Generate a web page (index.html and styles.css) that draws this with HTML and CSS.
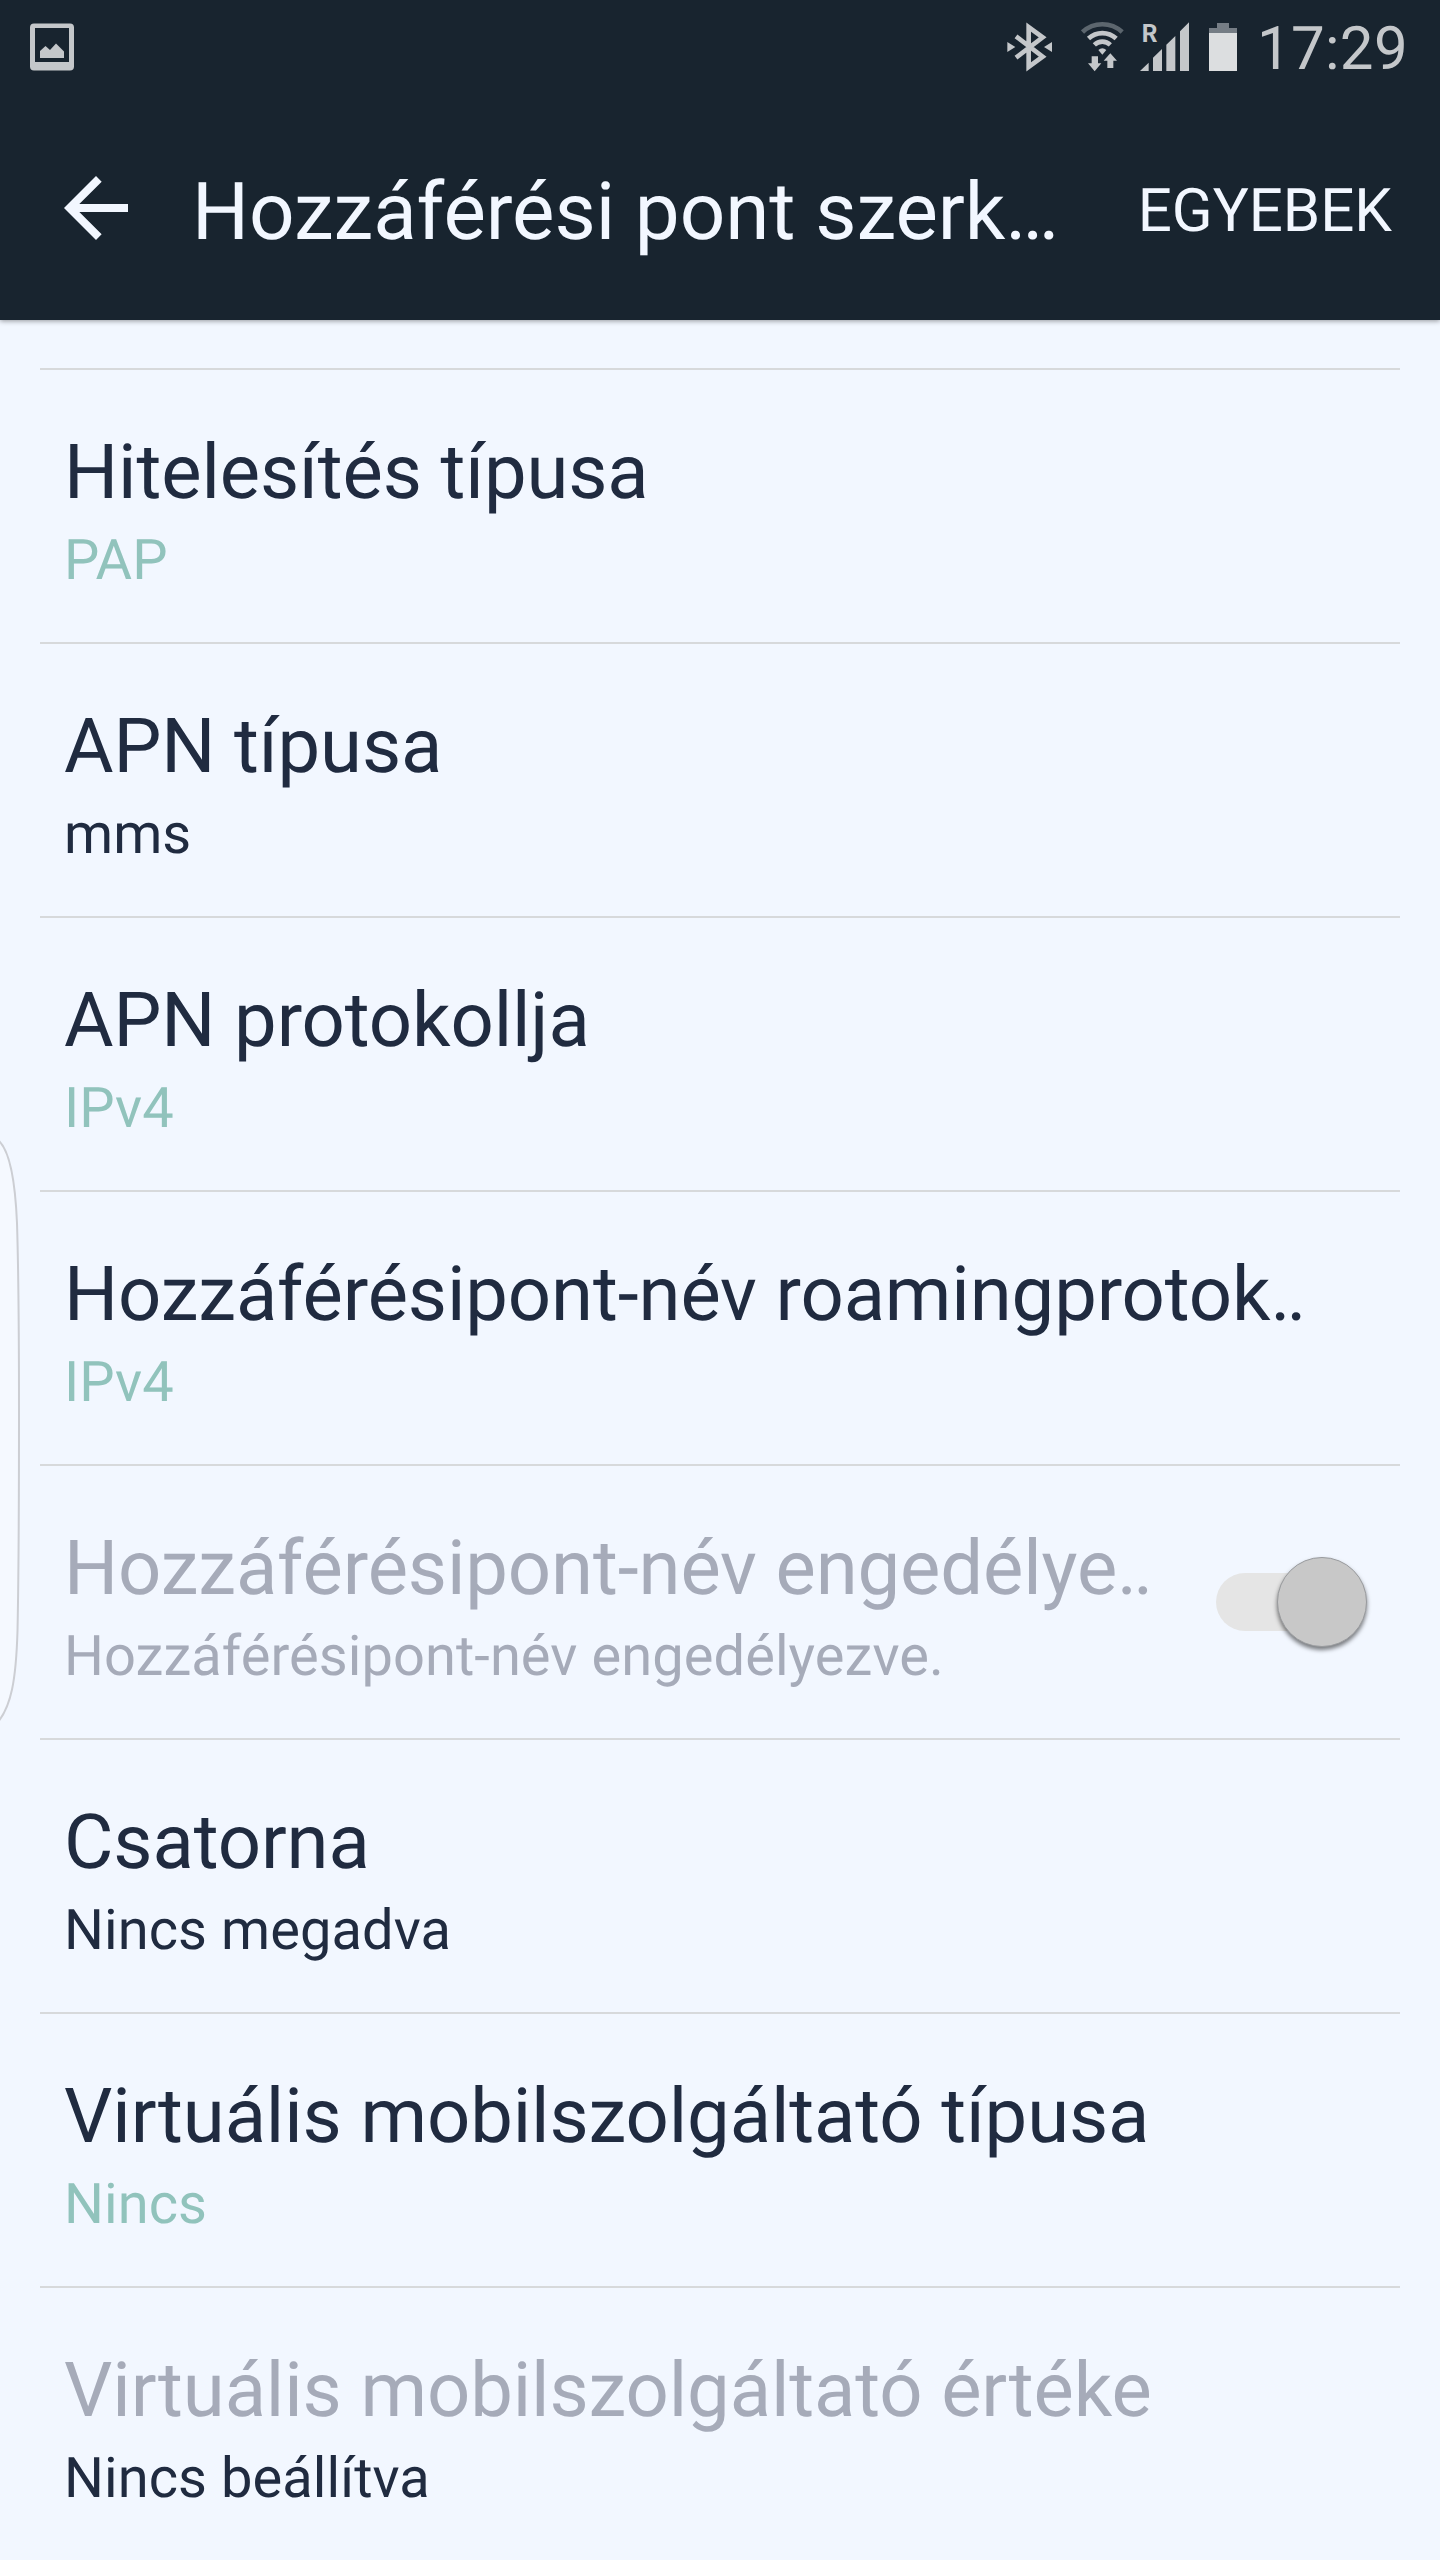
FILE: index.html
```html
<!DOCTYPE html>
<html lang="hu">
<head>
    <meta charset="UTF-8">
    <meta name="viewport" content="width=device-width, initial-scale=1.0">
    <title>Hozzáférési pont szerkesztése</title>
    <link rel="stylesheet" href="styles.css">
</head>
<body>
    <header>
        <div class="status">
            <svg class="picture" viewBox="0 0 44 48">
                <path fill-rule="evenodd" d="M4 .5H40Q44 .5 44 4.500V43.500Q44 47.500 40 47.500H4Q0 47.500 0 43.500V4.500Q0 .5 4 .5ZM5 5V39H39V5Z"/>
                <path d="M10 35V28L15.500 23L20 27L26 20.500L34 28.500V35Z"/>
            </svg>
            <svg class="bluetooth" viewBox="51 63 135 153">
                <path class="line" d="M78 109L158 170L116 201V81L158 112L78 173"/>
                <path d="M52 126L76 141L52 156ZM186 126L162 141L186 156Z"/>
            </svg>
            <svg class="wifi" viewBox="273 63 129 153">
                <path class="line dim" d="M277.500 96A87.500 87.500 0 0 1 396.500 96"/>
                <path class="line" d="M295.500 115.500A61 61 0 0 1 378.500 115.500M313 134.500A35 35 0 0 1 361 134.500"/>
                <path d="M325 150Q337 139 349 150L337 164ZM305 169H324V190H334L314 214L294 190H305ZM361 160L381 182H370V204H352V182H341Z"/>
            </svg>
            <svg class="signal" viewBox="447 33 153 183">
                <path d="M450 213L476 188V213ZM489 213V173L516 147V213ZM529 213V134L556 108V213ZM570 213V94L597 67V213Z"/>
                <text x="455" y="126" textLength="47" lengthAdjust="spacingAndGlyphs">R</text>
            </svg>
            <svg class="battery" viewBox="27 63 84 153">
                <path class="empty" d="M51 69H87V84H111V99H27V84H51Z"/>
                <path class="full" d="M27 99H111V213H27Z"/>
            </svg>
            <span class="clock">17:29</span>
        </div>
        <div class="appbar">
            <svg class="back" viewBox="0 0 24 24"><path d="M20 11H7.830l5.590-5.590L12 4l-8 8 8 8 1.410-1.410L7.830 13H20v-2z"/></svg>
            <h1>Hozzáférési pont szerk…</h1>
            <span class="more">EGYEBEK</span>
        </div>
    </header>
    <svg class="edge" viewBox="0 0 24 600"><path d="M-2 29C9 38 15 65 17 112C18.500 160 19 220 19 300C19 390 19 450 17.500 520C16 570 11 595 -2 611"/></svg>
    <ul class="list">
        <li>
            <div class="title">Hitelesítés típusa</div>
            <div class="value green">PAP</div>
        </li>
        <li>
            <div class="title">APN típusa</div>
            <div class="value">mms</div>
        </li>
        <li>
            <div class="title">APN protokollja</div>
            <div class="value green">IPv4</div>
        </li>
        <li>
            <div class="title">Hozzáférésipont-név roamingprotok<span class="dots">..</span></div>
            <div class="value green">IPv4</div>
        </li>
        <li class="with-switch">
            <div>
                <div class="title off">Hozzáférésipont-név engedélye<span class="dots">..</span></div>
                <div class="value off">Hozzáférésipont-név engedélyezve.</div>
            </div>
            <div class="switch"><div class="knob"></div></div>
        </li>
        <li>
            <div class="title">Csatorna</div>
            <div class="value">Nincs megadva</div>
        </li>
        <li>
            <div class="title">Virtuális mobilszolgáltató típusa</div>
            <div class="value green">Nincs</div>
        </li>
        <li>
            <div class="title off">Virtuális mobilszolgáltató értéke</div>
            <div class="value">Nincs beállítva</div>
        </li>
    </ul>
</body>
</html>
```
FILE: styles.css
```css
body { margin: 0; height: 2560px; overflow: hidden; position: relative; font-family: Roboto, sans-serif; text-rendering: geometricPrecision; background: #f2f7ff; color: #202b40; }
svg { display: block; flex: none; }
header { height: 320px; background: #18242f; color: #f2f7ff; box-shadow: 0 1px 5px rgba(0, 0, 0, 0.4); }

.status { display: flex; align-items: flex-start; height: 96px; padding: 0 32px 0 30px; box-sizing: border-box; fill: #c4c7ca; color: #c4c7ca; }
.status svg { height: 51px; margin-top: 21px; }
.status .picture { width: 44px; height: 48px; margin-top: 23px; margin-right: auto; }
.status .bluetooth { width: 45px; margin-right: 29px; }
.status .wifi { width: 43px; margin-right: 15px; }
.status .signal { width: 51px; height: 61px; margin-top: 11px; margin-right: 19px; }
.status .battery { width: 28px; margin-right: 20px; }
.status .line { fill: none; stroke: #c4c7ca; stroke-width: 14; }
.status .dim { stroke: #5c666e; }
.status text { font-size: 76px; font-weight: bold; }
.status .empty { fill: #757d85; }
.status .full { fill: #dcdee0; }
.clock { font-size: 60px; line-height: 70px; margin-top: 14px; width: 151px; letter-spacing: 0.3px; white-space: nowrap; }

.appbar { display: flex; align-items: center; height: 224px; padding: 0 48px; }
.back { width: 96px; height: 96px; fill: #f2f7ff; }
.appbar h1 { flex: 1; margin: 7px 0 0 48px; font-size: 80px; line-height: 94px; font-weight: normal; letter-spacing: -0.07px; white-space: nowrap; }
.more { font-size: 60px; line-height: 70px; margin-top: 6px; white-space: nowrap; }

.edge { position: absolute; left: 0; top: 1111px; width: 24px; height: 600px; overflow: visible; fill: #f5f9ff; stroke: #ccced3; stroke-width: 2; }

.list { list-style: none; margin: 48px 40px 0; padding: 0; }
.list li { height: 274px; padding: 57px 24px 0; box-sizing: border-box; border-top: 2px solid #d7d9db; white-space: nowrap; }
.title { font-size: 76px; line-height: 90px; letter-spacing: -0.12px; }
.dots { letter-spacing: -4px; }
.value { font-size: 56px; line-height: 66px; margin-top: 10px; letter-spacing: 0.07px; }
.green { color: #91c3bc; }
.off { color: #a6abb9; }
.list .with-switch { display: flex; justify-content: space-between; align-items: flex-start; }
.switch { width: 120px; height: 58px; margin: 50px 40px 0 0; border-radius: 29px; background: #e5e5e5; position: relative; }
.knob { position: absolute; left: 61px; top: -16px; width: 90px; height: 90px; box-sizing: border-box; border: 1px solid #999b9e; border-radius: 50%; background: #c8c8c8; box-shadow: 0 3px 4px rgba(0, 0, 0, 0.5); }
```
